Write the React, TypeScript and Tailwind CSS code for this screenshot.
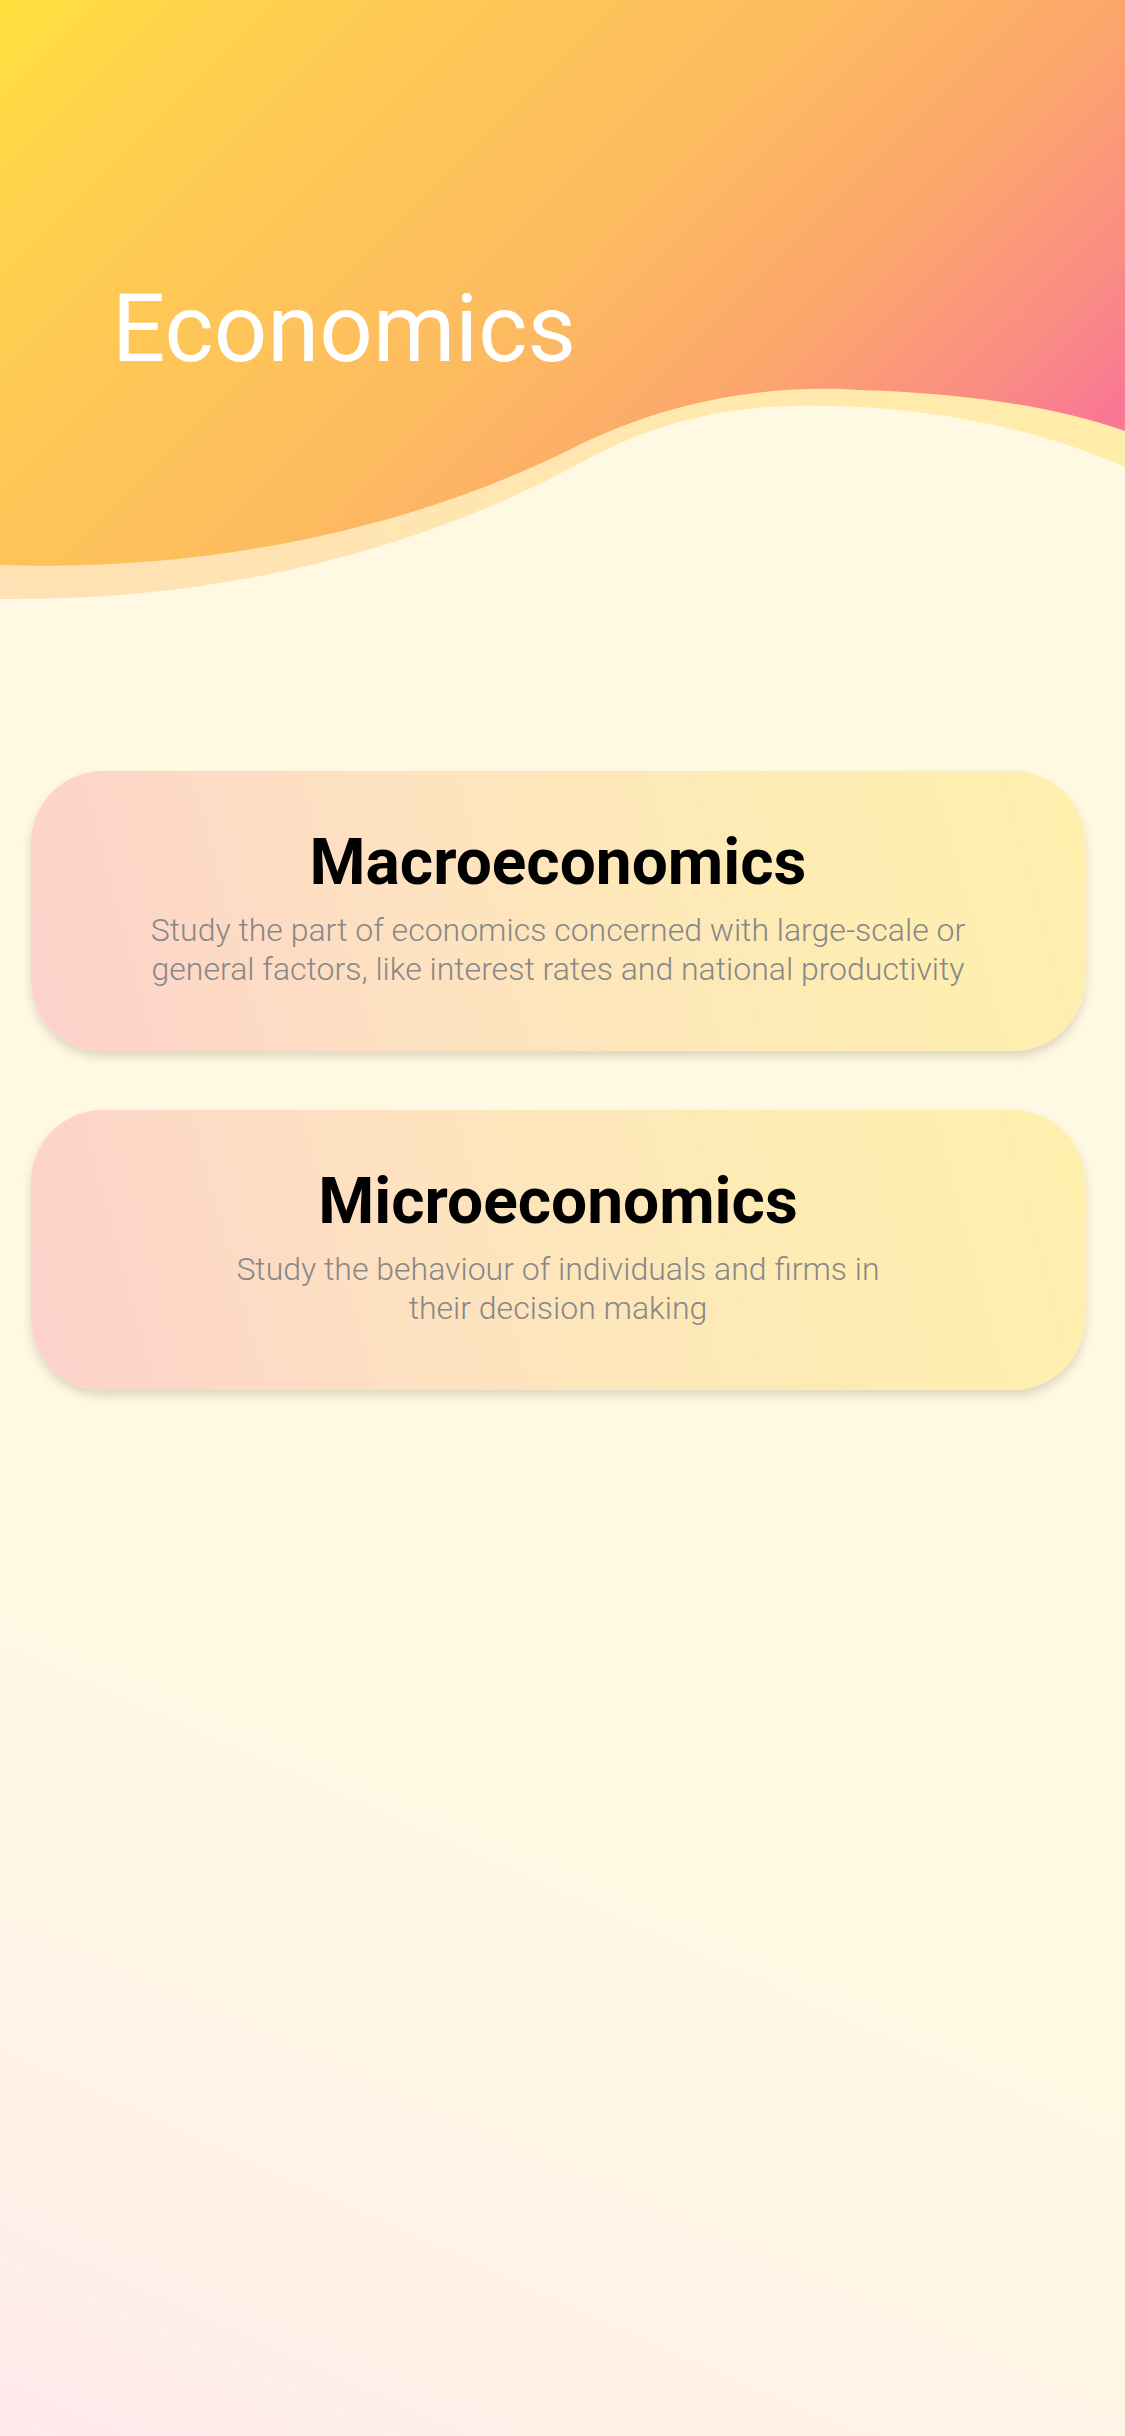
import React from "react";

const topics = [
  {
    title: "Macroeconomics",
    lines: [
      "Study the part of economics concerned with large-scale or",
      "general factors, like interest rates and national productivity",
    ],
  },
  {
    title: "Microeconomics",
    lines: ["Study the behaviour of individuals and firms in", "their decision making"],
  },
];

function HeaderWave() {
  return (
    <svg
      className="absolute inset-0 h-[620px] w-[1125px]"
      viewBox="0 0 1125 620"
      preserveAspectRatio="none"
    >
      <defs>
        <linearGradient id="sun" x1="0" y1="0" x2="760" y2="760" gradientUnits="userSpaceOnUse">
          <stop offset="0" stopColor="#ffe03d" />
          <stop offset="0.12" stopColor="#fed54a" />
          <stop offset="0.3" stopColor="#fec856" />
          <stop offset="0.55" stopColor="#fdbb60" />
          <stop offset="0.75" stopColor="#fca56e" />
          <stop offset="0.9" stopColor="#fa8d83" />
          <stop offset="1" stopColor="#f97893" />
        </linearGradient>
        <linearGradient id="band" x1="0" y1="0" x2="1125" y2="0" gradientUnits="userSpaceOnUse">
          <stop offset="0" stopColor="#ffe1b5" />
          <stop offset="1" stopColor="#ffedaa" />
        </linearGradient>
      </defs>
      <path
        d="M0 0 H1125 V467 C1040 430 940 408 830 406 C750 404 670 413 580 463 C430 545 230 602 0 599 Z"
        fill="url(#band)"
      />
      <path
        d="M0 0 H1125 V431 C1050 405 960 393 860 390 C780 385 680 395 575 447 C420 525 220 572 0 565 Z"
        fill="url(#sun)"
      />
    </svg>
  );
}

function TopicCard({ title, lines }: { title: string; lines: string[] }) {
  return (
    <div className="ml-[31px] flex h-[280px] w-[1054px] flex-col items-center justify-center rounded-[72px] bg-[linear-gradient(75deg,#fdd1cb_0%,#fde3bf_40%,#feecb3_75%,#fff0ad_100%)] pb-[6px] text-center shadow-[0_6px_10px_rgba(110,100,70,0.22)]">
      <h2 className="text-[64px] font-bold leading-[72px] text-black">{title}</h2>
      <p className="mt-[12px] text-[32px] font-light leading-[39px] text-[#888888]">
        {lines.map((l, i) => (
          <span key={i} className="block">
            {l}
          </span>
        ))}
      </p>
    </div>
  );
}

export default function App() {
  return (
    <div className="relative min-h-[2436px] w-[1125px] bg-[linear-gradient(24deg,#ffe9ec_0%,#fff3e6_12%,#fff8e3_28%,#fff8e3_100%)] font-['Roboto',sans-serif]">
      <header className="relative h-[620px]">
        <HeaderWave />
        <h1 className="relative pl-[112px] pt-[282px] text-[94px] font-normal leading-none text-white">
          Economics
        </h1>
      </header>
      <main className="mt-[151px] flex flex-col gap-[59px]">
        {topics.map((t) => (
          <TopicCard key={t.title} title={t.title} lines={t.lines} />
        ))}
      </main>
    </div>
  );
}
